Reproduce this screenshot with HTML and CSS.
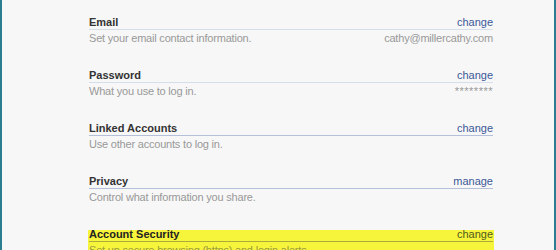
FILE: index.html
```html
<!DOCTYPE html>
<html lang="en">
<head>
    <meta charset="UTF-8">
    <title>Account Settings</title>
    <link rel="stylesheet" href="styles.css">
</head>
<body>

    <div class="settings">
        <!-- Email -->
        <div class="setting faded">
            <div class="setting-head">
                <span class="setting-title">Email</span>
                <a class="setting-link" href="#">change</a>
            </div>
            <div class="setting-desc">
                <span>Set your email contact information.</span>
                <span class="setting-value">cathy@millercathy.com</span>
            </div>
        </div>

        <!-- Password -->
        <div class="setting faded">
            <div class="setting-head">
                <span class="setting-title">Password</span>
                <a class="setting-link" href="#">change</a>
            </div>
            <div class="setting-desc">
                <span>What you use to log in.</span>
                <span class="setting-value stars">********</span>
            </div>
        </div>

        <!-- Linked Accounts -->
        <div class="setting">
            <div class="setting-head">
                <span class="setting-title">Linked Accounts</span>
                <a class="setting-link" href="#">change</a>
            </div>
            <div class="setting-desc">
                <span>Use other accounts to log in.</span>
            </div>
        </div>

        <!-- Privacy -->
        <div class="setting">
            <div class="setting-head">
                <span class="setting-title">Privacy</span>
                <a class="setting-link" href="#">manage</a>
            </div>
            <div class="setting-desc">
                <span>Control what information you share.</span>
            </div>
        </div>

        <!-- Account Security (highlighted) -->
        <div class="setting highlight">
            <div class="setting-head">
                <span class="setting-title">Account Security</span>
                <a class="setting-link" href="#">change</a>
            </div>
            <div class="setting-desc">
                <span>Set up secure browsing (https) and login alerts.</span>
            </div>
        </div>
    </div>

</body>
</html>
```

FILE: styles.css
```css
/* Page frame with the teal edges */
html, body {
    height: 100%;
}

body {
    margin: 0;
    font-family: "Liberation Sans", Arial, sans-serif;
    font-size: 11px;
    background-color: #f7f7f7;
    border-left: 2px solid #2b7d92;
    border-right: 2px solid #2b7d92;
    overflow: hidden;
    box-sizing: border-box;
}

/* Settings list */
.settings {
    width: 404px;
    margin-left: 87px;
    padding-top: 15px;
}

.setting {
    margin-bottom: 23px;
}

.setting-head {
    display: flex;
    justify-content: space-between;
    align-items: flex-end;
    line-height: 14px;
    border-bottom: 1px solid #b4c0da;
}

.setting-title {
    font-weight: bold;
    color: #333333;
}

.setting-link {
    color: #3b5998;
    text-decoration: none;
}

.setting-desc {
    display: flex;
    justify-content: space-between;
    line-height: 14px;
    padding-top: 1px;
    color: #999999;
    letter-spacing: -0.2px;
}

.setting-value {
    color: #999999;
}

.stars {
    letter-spacing: 0.5px;
}

/* First rows have a lighter rule */
.faded .setting-head {
    border-bottom-color: #d6deea;
}

/* Highlighted row: the yellow starts a little below the title top */
.highlight {
    background: linear-gradient(to bottom, transparent 3px, #f7f53b 3px);
    margin-left: -1px;
    margin-right: -1px;
    padding: 0 1px;
}

.highlight .setting-head {
    border-bottom-color: #a9ab3a;
}

.highlight .setting-title {
    color: #222222;
}

.highlight .setting-link {
    color: #505a20;
}

.highlight .setting-desc {
    color: #9a9a40;
}
```
